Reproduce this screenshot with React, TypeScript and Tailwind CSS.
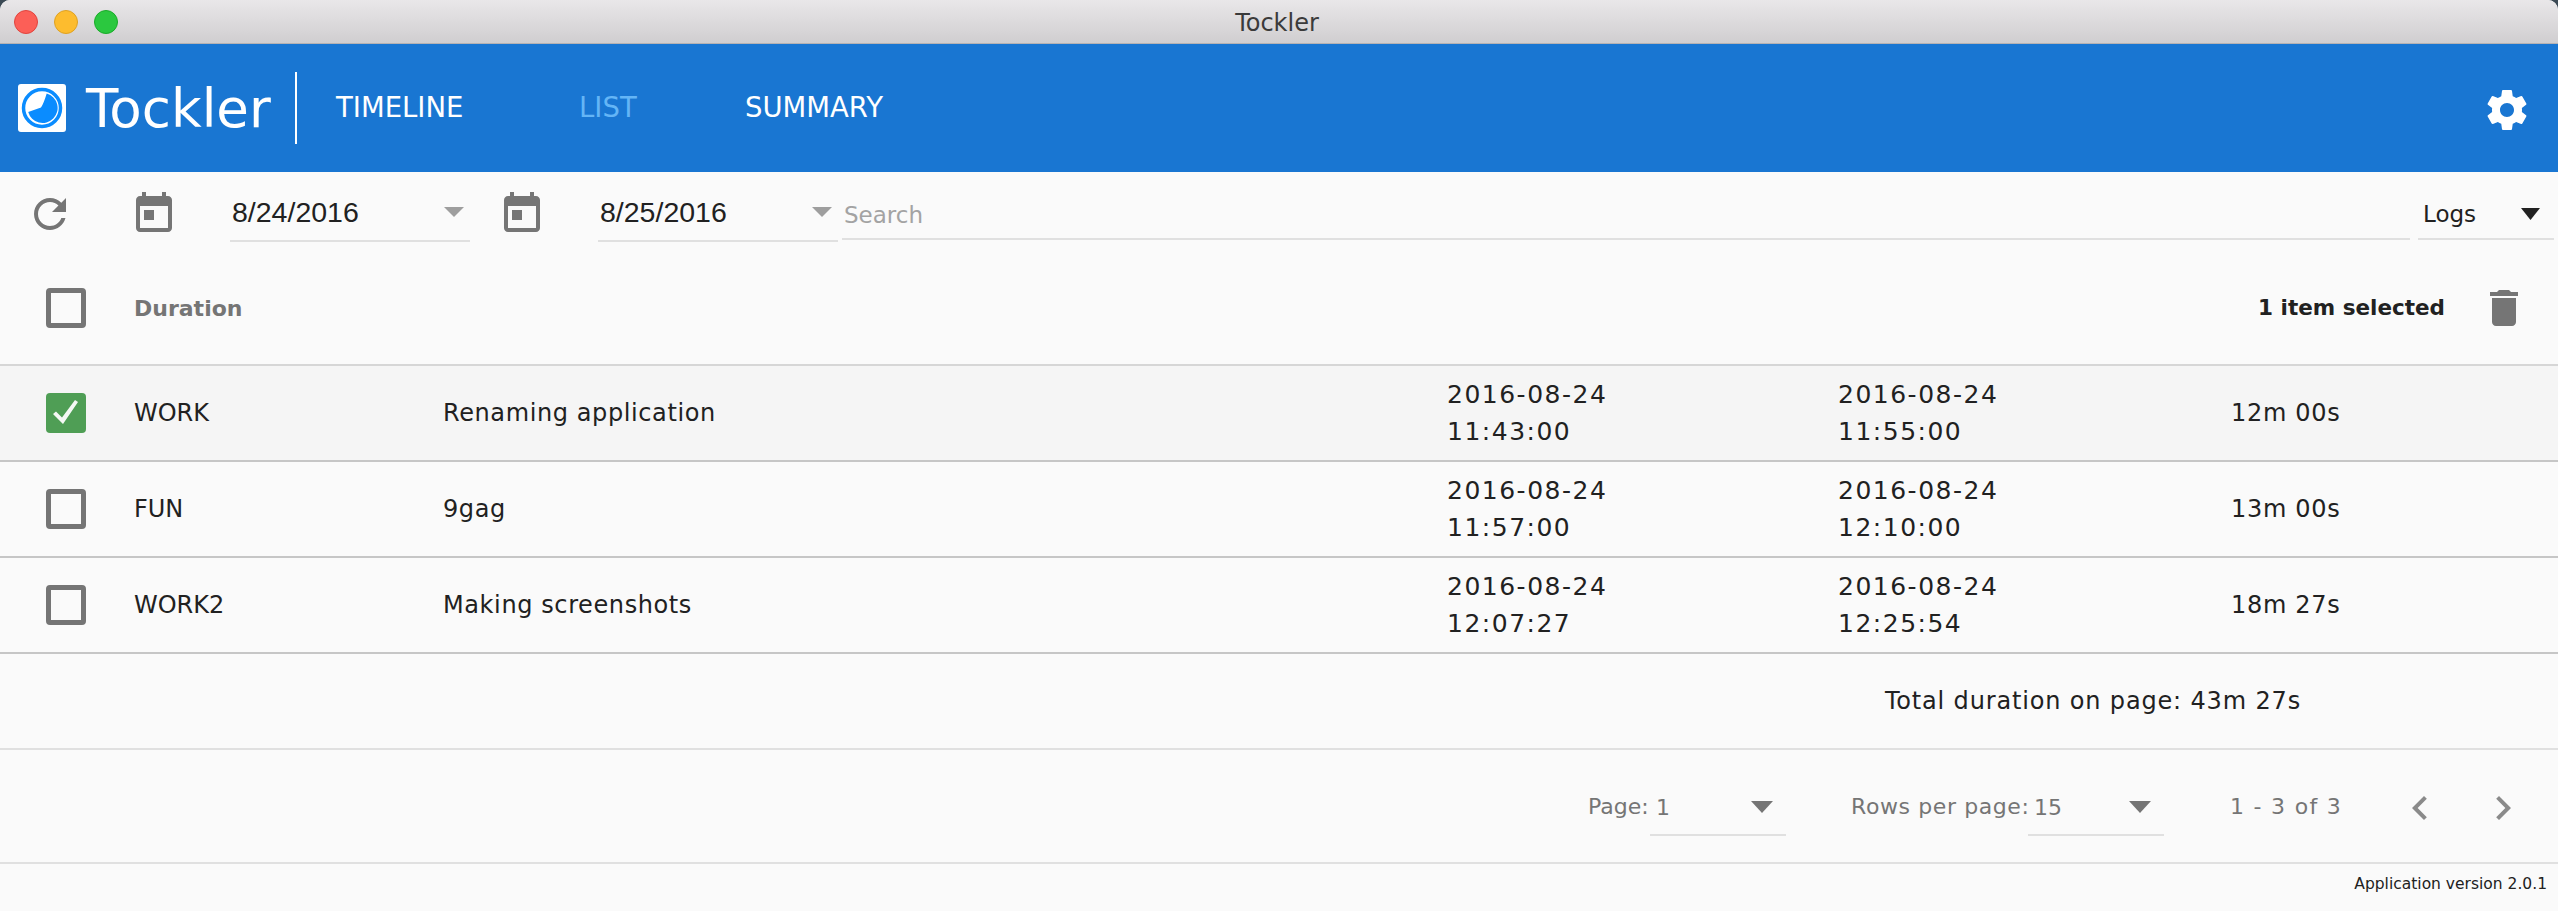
import React from 'react';

const ui = '"DejaVu Sans", sans-serif';

// material icon paths
const TODAY = 'M19 3h-1V1h-2v2H8V1H6v2H5c-1.11 0-1.99.9-1.99 2L3 19c0 1.1.89 2 2 2h14c1.1 0 2-.9 2-2V5c0-1.1-.9-2-2-2zm0 16H5V8h14v11zM7 10h5v5H7z';
const REFRESH = 'M17.65 6.35C16.2 4.9 14.21 4 12 4c-4.42 0-7.99 3.58-7.99 8s3.57 8 7.99 8c3.73 0 6.84-2.55 7.73-6h-2.08c-.82 2.33-3.04 4-5.65 4-3.31 0-6-2.69-6-6s2.69-6 6-6c1.66 0 3.14.69 4.22 1.78L13 11h7V4l-2.35 2.35z';
const SETTINGS = 'M19.43 12.98c.04-.32.07-.64.07-.98s-.03-.66-.07-.98l2.11-1.65c.19-.15.24-.42.12-.64l-2-3.46c-.12-.22-.39-.3-.61-.22l-2.49 1c-.52-.4-1.08-.73-1.69-.98l-.38-2.65C14.46 2.18 14.25 2 14 2h-4c-.25 0-.46.18-.49.42l-.38 2.65c-.61.25-1.17.59-1.69.98l-2.49-1c-.23-.09-.49 0-.61.22l-2 3.46c-.13.22-.07.49.12.64l2.11 1.65c-.04.32-.07.65-.07.98s.03.66.07.98l-2.11 1.65c-.19.15-.24.42-.12.64l2 3.46c.12.22.39.3.61.22l2.49-1c.52.4 1.08.73 1.69.98l.38 2.65c.03.24.24.42.49.42h4c.25 0 .46-.18.49-.42l.38-2.65c.61-.25 1.17-.59 1.69-.98l2.49 1c.23.09.49 0 .61-.22l2-3.46c.12-.22.07-.49-.12-.64l-2.11-1.65zM12 15.5c-1.93 0-3.5-1.57-3.5-3.5s1.57-3.5 3.5-3.5 3.5 1.57 3.5 3.5-1.57 3.5-3.5 3.5z';
const TRASH = 'M6 19c0 1.1.9 2 2 2h8c1.1 0 2-.9 2-2V7H6v12zM19 4h-3.5l-1-1h-5l-1 1H5v2h14V4z';
const LEFT = 'M15.41 7.41L14 6l-6 6 6 6 1.41-1.41L10.83 12z';
const RIGHT = 'M10 6L8.59 7.41 13.17 12l-4.58 4.59L10 18l6-6z';

const Icon = ({ d, className = '' }: { d: string; className?: string }) => (
    <svg viewBox="0 0 24 24" className={`w-[48px] h-[48px] shrink-0 fill-current ${className}`}>
        <path d={d} />
    </svg>
);

const Arrow = ({ className = '' }: { className?: string }) => (
    <svg viewBox="0 0 20 10" preserveAspectRatio="none" className={`shrink-0 fill-current ${className}`}>
        <path d="M0 0h20L10 10z" />
    </svg>
);

const Checkbox = ({ checked = false }: { checked?: boolean }) =>
    checked ? (
        <div className="w-[40px] h-[40px] shrink-0 rounded-[4px] bg-[#4f9e55] flex items-center justify-center">
            <svg viewBox="0 0 40 40" className="w-[40px] h-[40px]">
                <path d="M7 21l3-2.500 6 6L29 7l3 2-15 22z" fill="#f4f8f4" />
            </svg>
        </div>
    ) : (
        <div className="w-[40px] h-[40px] shrink-0 rounded-[4px] border-[5px] border-[#757575]" />
    );

const DateField = ({ value }: { value: string }) => (
    <div className="w-[240px] h-[52px] border-b-2 border-[#e0e0e0] flex items-center justify-between pl-[2px] pr-[6px] pb-[6px]">
        <span className="text-[28.500px] text-[#212121] font-['Liberation_Sans',sans-serif]">{value}</span>
        <Arrow className="w-[20px] h-[10px] text-[#9e9e9e]" />
    </div>
);

const PageSelect = ({ value }: { value: string }) => (
    <div className="w-[136px] h-[56px] border-b-2 border-[#e0e0e0] flex items-center justify-between pl-[6px] pr-[13px] pt-[2px] pb-[2px]">
        <span className="text-[22px] text-[#757575]">{value}</span>
        <Arrow className="w-[22px] h-[12px] text-[#757575]" />
    </div>
);

const rows = [
    { tag: 'WORK', title: 'Renaming application', from: ['2016-08-24', '11:43:00'], to: ['2016-08-24', '11:55:00'], dur: '12m 00s', selected: true },
    { tag: 'FUN', title: '9gag', from: ['2016-08-24', '11:57:00'], to: ['2016-08-24', '12:10:00'], dur: '13m 00s', selected: false },
    { tag: 'WORK2', title: 'Making screenshots', from: ['2016-08-24', '12:07:27'], to: ['2016-08-24', '12:25:54'], dur: '18m 27s', selected: false },
];

export default function App() {
    return (
        <div className="w-[2558px] h-[911px] overflow-hidden bg-[#3c4a55]" style={{ fontFamily: ui }}>
            <div className="h-full rounded-t-[10px] overflow-hidden bg-[#fafafa] flex flex-col">
                {/* Title bar */}
                <div className="relative h-[44px] shrink-0 bg-gradient-to-b from-[#e9e7e9] to-[#d0ced0] border-b border-[#b4b2b4] flex items-center justify-center pt-[2px] pr-[4px]">
                    <div className="absolute left-[14px] top-[10px] flex gap-[16px]">
                        <span className="w-[24px] h-[24px] rounded-full bg-[#fc5f57] border border-[#e0443e]" />
                        <span className="w-[24px] h-[24px] rounded-full bg-[#fdbc2e] border border-[#dea123]" />
                        <span className="w-[24px] h-[24px] rounded-full bg-[#2bc83f] border border-[#1aab29]" />
                    </div>
                    <span className="text-[24px] text-[#3a3a3a]">Tockler</span>
                </div>

                {/* App bar */}
                <div className="h-[128px] shrink-0 bg-[#1976d2] flex items-center text-white">
                    <svg viewBox="0 0 48 48" className="w-[48px] h-[48px] ml-[18px] shrink-0">
                        <rect width="48" height="48" rx="3" fill="#fff" />
                        <circle cx="24" cy="24" r="18.500" fill="none" stroke="#0a8cff" strokeWidth="3.500" />
                        <path d="M28.700 9.500A15 15 0 1 1 10.200 28L23 23.500Q25.500 20 28.700 9.500z" fill="#0a8cff" />
                    </svg>
                    <span className="ml-[20px] w-[209px] text-[53px] leading-none">Tockler</span>
                    <div className="w-[2px] h-[72px] bg-white" />
                    <span className="ml-[39px] w-[243px] text-[27.500px]">TIMELINE</span>
                    <span className="w-[166px] text-[27.500px] text-[#64b5f6]">LIST</span>
                    <span className="text-[27.500px]">SUMMARY</span>
                    <Icon d={SETTINGS} className="ml-auto mr-[27px] mt-[4px]" />
                </div>

                {/* Filters */}
                <div className="h-[70px] shrink-0 flex items-start pt-[18px] pl-[26px]">
                    <Icon d={REFRESH} className="text-[#757575]" />
                    <Icon d={TODAY} className="ml-[56px] text-[#757575]" />
                    <div className="ml-[52px]"><DateField value="8/24/2016" /></div>
                    <Icon d={TODAY} className="ml-[28px] text-[#757575]" />
                    <div className="ml-[52px]"><DateField value="8/25/2016" /></div>
                    <div className="ml-[4px] w-[1568px] h-[50px] border-b-2 border-[#e0e0e0] flex items-center pl-[2px] pt-[2px]">
                        <span className="text-[23px] text-[#a3a3a3]">Search</span>
                    </div>
                    <div className="ml-[8px] w-[136px] h-[50px] border-b-2 border-[#e0e0e0] flex items-center justify-between pl-[5px] pr-[14px]">
                        <span className="text-[23px] text-[#212121]">Logs</span>
                        <Arrow className="w-[19px] h-[12px] text-[#212121]" />
                    </div>
                </div>

                {/* Table head */}
                <div className="h-[124px] shrink-0 border-b-2 border-[#d6d6d6] flex items-center pt-[10px] pl-[46px] pr-[36px]">
                    <Checkbox />
                    <span className="ml-[48px] text-[22px] font-bold text-[#757575]">Duration</span>
                    <span className="ml-auto text-[21.500px] font-bold text-[#212121]">1 item selected</span>
                    <Icon d={TRASH} className="ml-[35px] mr-[-6px] text-[#757575]" />
                </div>

                {/* Rows */}
                {rows.map((r) => (
                    <div
                        key={r.tag}
                        className={`h-[96px] shrink-0 border-b-2 border-[#c6c6c6] flex items-center pl-[46px] text-[24px] text-[#212121] ${r.selected ? 'bg-[#f5f5f5]' : ''}`}
                    >
                        <Checkbox checked={r.selected} />
                        <span className="ml-[48px] w-[309px]">{r.tag}</span>
                        <span className="w-[1004px] tracking-[0.6px]">{r.title}</span>
                        <div className="w-[391px] text-[25px] leading-[37px] tracking-[1.5px]">
                            <div>{r.from[0]}</div>
                            <div>{r.from[1]}</div>
                        </div>
                        <div className="w-[393px] text-[25px] leading-[37px] tracking-[1.5px]">
                            <div>{r.to[0]}</div>
                            <div>{r.to[1]}</div>
                        </div>
                        <span className="tracking-[0.7px]">{r.dur}</span>
                    </div>
                ))}

                {/* Total */}
                <div className="h-[96px] shrink-0 border-b-2 border-[#e0e0e0] flex items-center justify-end pr-[257px] text-[24px] tracking-[0.84px] text-[#212121]">
                    Total duration on page: 43m 27s
                </div>

                {/* Pagination */}
                <div className="h-[114px] shrink-0 border-b-2 border-[#e0e0e0] flex items-start justify-end pt-[30px] pr-[31px] text-[22px] text-[#757575]">
                    <span className="w-[62px] h-[52px] flex items-center whitespace-nowrap">Page:</span>
                    <PageSelect value="1" />
                    <span className="ml-[65px] w-[177px] h-[52px] flex items-center whitespace-nowrap tracking-[0.6px]">Rows per page:</span>
                    <PageSelect value="15" />
                    <span className="ml-[66px] w-[110px] h-[52px] flex items-center whitespace-nowrap tracking-[1.3px]">1 - 3 of 3</span>
                    <Icon d={LEFT} className="ml-[56px] mt-[4px] text-[#8a8a8a]" />
                    <Icon d={RIGHT} className="ml-[35px] mt-[4px] text-[#8a8a8a]" />
                </div>

                {/* Footer */}
                <div className="flex-1 flex items-center justify-end pr-[11px] pb-[6px] text-[15.500px] text-[#212121]">
                    Application version 2.0.1
                </div>
            </div>
        </div>
    );
}
